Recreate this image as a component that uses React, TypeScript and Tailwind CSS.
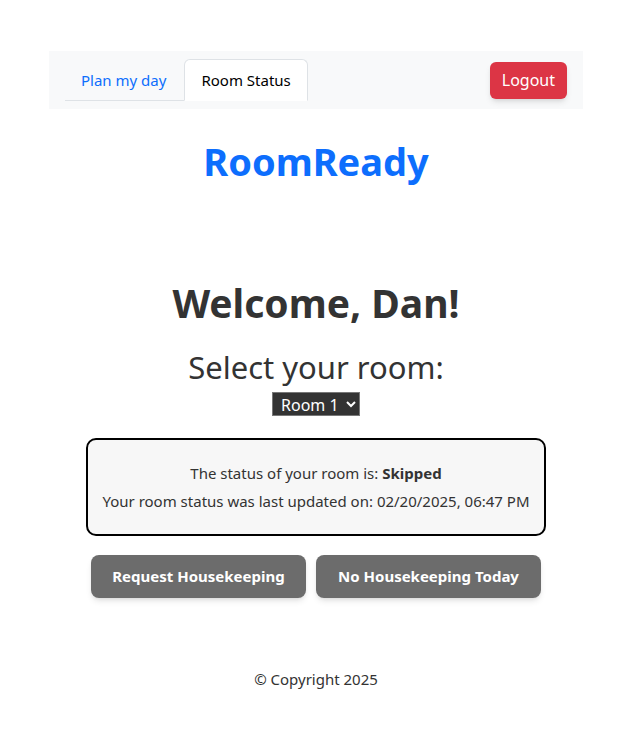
export default function App() {
  return (
    <div className="min-h-[732px] bg-white font-['Noto_Sans',sans-serif] text-[#333]">
      <div className="ml-[49px] w-[534px] pt-[51px]">
        <nav className="flex h-[58px] items-center justify-between bg-[#f8f9fa] pl-4 pr-4">
          <div className="flex h-full items-end pb-2">
            <div className="flex items-end border-b border-[#dee2e6]">
              <span className="px-4 py-[9px] text-[15px] text-[#0d6efd]">Plan my day</span>
              <span className="-mb-px ml-[2px] rounded-t-md border border-[#dee2e6] border-b-white bg-white px-4 py-[9px] text-[15px] text-black">
                Room Status
              </span>
            </div>
          </div>
          <button className="h-[37px] rounded-md bg-[#dc3545] px-3 text-[16px] text-white shadow-md">Logout</button>
        </nav>

        <h1 className="mt-[26px] text-center text-[38px] font-bold leading-[52px] text-[#0d6efd]">RoomReady</h1>

        <h2 className="mt-[90px] text-center text-[39px] font-bold leading-[52px]">Welcome, Dan!</h2>
        <h3 className="mt-[18px] text-center text-[31px] leading-[40px]">Select your room:</h3>
        <div className="mt-[5px] flex justify-center">
          <select className="h-[24px] border border-[#777] bg-[#333] pl-1 pr-1 text-[16px] text-white">
            <option>Room 1</option>
          </select>
        </div>

        <div className="mx-[37px] mt-[22px] rounded-[10px] border-2 border-black bg-[#f7f7f7] py-[19px] text-center text-[15px] leading-[28px]">
          <p>
            The status of your room is: <b>Skipped</b>
          </p>
          <p>Your room status was last updated on: 02/20/2025, 06:47 PM</p>
        </div>

        <div className="mt-[19px] flex justify-center gap-[10px]">
          <button className="h-[43px] w-[215px] rounded-lg bg-[#6c6c6c] text-[15px] font-bold text-white shadow-md">
            Request Housekeeping
          </button>
          <button className="h-[43px] w-[225px] rounded-lg bg-[#6c6c6c] text-[15px] font-bold text-white shadow-md">
            No Housekeeping Today
          </button>
        </div>

        <footer className="mt-[70px] text-center text-[15px]">© Copyright 2025</footer>
      </div>
    </div>
  );
}
